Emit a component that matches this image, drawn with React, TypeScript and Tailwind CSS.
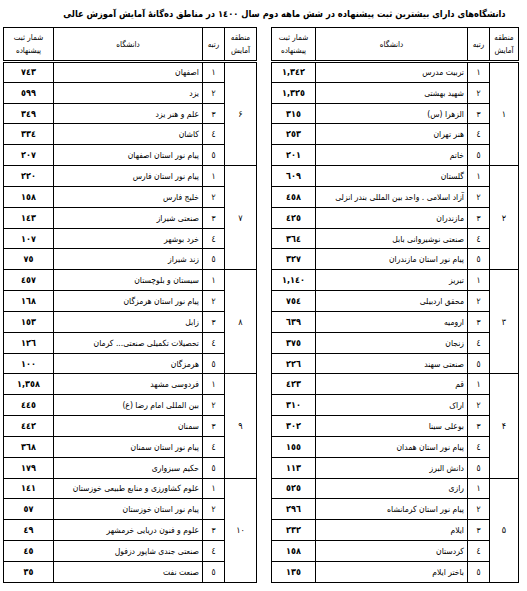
import React from 'react';

type Region = { region: string; rows: [string, string][] };

const toAr = (s: string) => s.replace(/[0-9]/g, (d) => '٠١٢٣٤٥٦٧٨٩'[Number(d)]);
const ranks = ['١', '٢', '٣', '٤', '٥'];

const rightRegions: Region[] = [
  {
    region: '۱',
    rows: [
      ['تربیت مدرس', '1,342'],
      ['شهید بهشتی', '1,325'],
      ['الزهرا (س)', '315'],
      ['هنر تهران', '253'],
      ['خاتم', '201'],
    ],
  },
  {
    region: '۲',
    rows: [
      ['گلستان', '609'],
      ['آزاد اسلامی . واحد بین المللی بندر انزلی', '458'],
      ['مازندران', '425'],
      ['صنعتی نوشیروانی بابل', '364'],
      ['پیام نور استان مازندران', '327'],
    ],
  },
  {
    region: '۳',
    rows: [
      ['تبریز', '1,140'],
      ['محقق اردبیلی', '754'],
      ['ارومیه', '639'],
      ['زنجان', '375'],
      ['صنعتی سهند', '226'],
    ],
  },
  {
    region: '۴',
    rows: [
      ['قم', '423'],
      ['اراک', '310'],
      ['بوعلی سینا', '302'],
      ['پیام نور استان همدان', '155'],
      ['دانش البرز', '113'],
    ],
  },
  {
    region: '۵',
    rows: [
      ['رازی', '525'],
      ['پیام نور استان کرمانشاه', '296'],
      ['ایلام', '232'],
      ['کردستان', '158'],
      ['باختر ایلام', '135'],
    ],
  },
];

const leftRegions: Region[] = [
  {
    region: '۶',
    rows: [
      ['اصفهان', '743'],
      ['یزد', '599'],
      ['علم و هنر یزد', '349'],
      ['کاشان', '334'],
      ['پیام نور استان اصفهان', '207'],
    ],
  },
  {
    region: '۷',
    rows: [
      ['پیام نور استان فارس', '220'],
      ['خلیج فارس', '158'],
      ['صنعتی شیراز', '143'],
      ['خرد بوشهر', '107'],
      ['زند شیراز', '75'],
    ],
  },
  {
    region: '۸',
    rows: [
      ['سیستان و بلوچستان', '457'],
      ['پیام نور استان هرمزگان', '168'],
      ['زابل', '153'],
      ['تحصیلات تکمیلی صنعتی... کرمان', '126'],
      ['هرمزگان', '100'],
    ],
  },
  {
    region: '۹',
    rows: [
      ['فردوسی مشهد', '1,358'],
      ['بین المللی امام رضا (ع)', '445'],
      ['سمنان', '442'],
      ['پیام نور استان سمنان', '368'],
      ['حکیم سبزواری', '179'],
    ],
  },
  {
    region: '۱۰',
    rows: [
      ['علوم کشاورزی و منابع طبیعی خوزستان', '141'],
      ['پیام نور استان خوزستان', '57'],
      ['علوم و فنون دریایی خرمشهر', '49'],
      ['صنعتی جندی شاپور دزفول', '45'],
      ['صنعت نفت', '35'],
    ],
  },
];

function RegionTable({ data, cols }: { data: Region[]; cols: [number, number, number, number] }) {
  const width = cols.reduce((a, b) => a + b, 0);
  return (
    <table dir="rtl" className="table-fixed border-collapse border border-black text-black" style={{ width }}>
      <colgroup>
        {cols.map((w, i) => (
          <col key={i} style={{ width: w }} />
        ))}
      </colgroup>
      <thead>
        <tr className="h-[34px] border-b-[3px] border-double border-black text-[8px] leading-[13px]">
          <th className="border border-black p-0 text-center font-normal">
            منطقه
            <br />
            آمایش
          </th>
          <th className="border border-black p-0 text-center font-normal">رتبه</th>
          <th className="border border-black p-0 text-center font-normal">دانشگاه</th>
          <th className="border border-black p-0 text-center font-normal">
            شمار ثبت
            <br />
            پیشنهاده
          </th>
        </tr>
      </thead>
      <tbody className="text-[8.5px] leading-[12px]">
        {data.map((g) =>
          g.rows.map(([name, count], i) => (
            <tr key={g.region + i} className="h-[20.84px]">
              {i === 0 && (
                <td rowSpan={5} className="border border-black p-0 text-center align-middle text-[9px]">
                  {g.region}
                </td>
              )}
              <td className="border border-black p-0 text-center">{ranks[i]}</td>
              <td className="overflow-hidden whitespace-nowrap border border-black p-0 pr-[3px] text-right">{name}</td>
              <td className="border border-black p-0 text-center text-[9px] font-bold">{toAr(count)}</td>
            </tr>
          ))
        )}
      </tbody>
    </table>
  );
}

export default function App() {
  return (
    <div className="h-[591px] w-[527px] overflow-hidden bg-white font-['DejaVu_Sans_Condensed','DejaVu_Sans',sans-serif]">
      <h1 dir="rtl" className="whitespace-nowrap pl-[42px] pt-[6px] text-center text-[9.25px] font-bold leading-[16px] text-black">
        دانشگاه‌های دارای بیشترین ثبت پیشنهاده در شش ماهه دوم سال ١٤٠٠ در مناطق ده‌گانهٔ آمایش آموزش عالی
      </h1>
      <div className="mt-[5px] flex items-start pl-[3px]">
        <RegionTable data={leftRegions} cols={[32, 22, 149, 50]} />
        <div className="ml-[14px]">
          <RegionTable data={rightRegions} cols={[29, 22, 152, 44]} />
        </div>
      </div>
    </div>
  );
}
